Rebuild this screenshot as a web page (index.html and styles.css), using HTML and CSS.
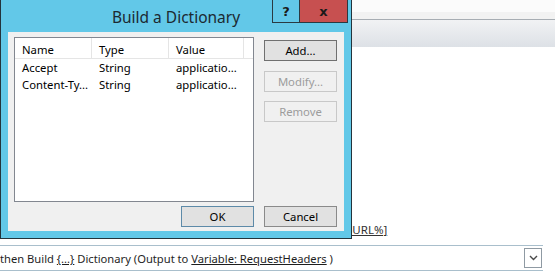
FILE: index.html
```html
<!DOCTYPE html>
<html>
<head>
<meta charset="utf-8">
<link rel="stylesheet" href="styles.css">
</head>
<body>
<div class="page">
  <div class="top-white"></div>
  <div class="tabstrip"></div>
  <div class="toolbar"></div>
  <div class="canvas">
    <div class="url-line"><span class="link">[%URL%]</span></div>
  </div>
  <div class="action-row">
    <div class="action-text">then Build <span class="link">{...}</span> Dictionary (Output to <span class="link">Variable: RequestHeaders</span> )</div>
    <div class="dropdown"><svg width="9" height="6" viewBox="0 0 9 6"><path d="M1 1 L4.5 4.5 L8 1" fill="none" stroke="#4a4a4a" stroke-width="1.4"/></svg></div>
  </div>
</div>

<div class="dialog">
  <div class="titlebar">
    <div class="title">Build a Dictionary</div>
    <div class="caption-buttons">
      <div class="cap-btn help">?</div>
      <div class="cap-btn close">x</div>
    </div>
  </div>
  <div class="client">
    <div class="listview">
      <div class="lv-row lv-header">
        <div class="lv-cell c1">Name</div>
        <div class="lv-cell c2">Type</div>
        <div class="lv-cell c3">Value</div>
        <div class="lv-cell c4"></div>
      </div>
      <div class="lv-row">
        <div class="lv-cell c1">Accept</div>
        <div class="lv-cell c2">String</div>
        <div class="lv-cell c3">applicatio...</div>
      </div>
      <div class="lv-row">
        <div class="lv-cell c1">Content-Ty...</div>
        <div class="lv-cell c2">String</div>
        <div class="lv-cell c3">applicatio...</div>
      </div>
    </div>
    <div class="side-buttons">
      <div class="btn">Add...</div>
      <div class="btn disabled">Modify...</div>
      <div class="btn disabled">Remove</div>
    </div>
    <div class="footer-left">
      <div class="btn default">OK</div>
    </div>
    <div class="footer-right">
      <div class="btn">Cancel</div>
    </div>
  </div>
</div>
</body>
</html>
```

FILE: styles.css
```css
* { box-sizing: border-box; }
html, body {
  margin: 0;
  padding: 0;
  width: 555px;
  height: 278px;
  overflow: hidden;
  background: #ffffff;
  font-family: "Noto Sans", "Open Sans", sans-serif;
  color: #1b1b1b;
}
.page {
  position: relative;
  width: 555px;
  height: 278px;
  display: flex;
  flex-direction: column;
}
.top-white { height: 12px; background: #fbfbfb; }
.tabstrip { height: 8px; background: #f2f2f2; border-bottom: 1px solid #a7adb3; }
.toolbar { height: 27px; background: linear-gradient(#f1f2f4, #dde1e6); }
.canvas {
  flex: 1;
  display: flex;
  flex-direction: column;
  justify-content: flex-end;
  padding-bottom: 8px;
}
.url-line {
  padding-left: 339px;
  font-size: 11.5px;
  line-height: 14px;
  color: #333;
}
.link { text-decoration: underline; }
.action-row {
  height: 26px;
  width: 543px;
  border-top: 1px solid #a9bfcc;
  border-bottom: 1px solid #a9bfcc;
  display: flex;
  align-items: center;
  justify-content: space-between;
  margin-bottom: 7px;
}
.action-text {
  font-size: 11.2px;
  color: #1e1e1e;
  white-space: nowrap;
  padding-left: 0;
}
.dropdown {
  width: 18px;
  height: 20px;
  border: 1px solid #8f9aa3;
  background: #fff;
  display: flex;
  align-items: center;
  justify-content: center;
  margin-right: 1px;
}

/* dialog window */
.dialog {
  position: absolute;
  left: 0;
  top: -1px;
  width: 352px;
  height: 240px;
  background: #62c8e8;
  border: 1px solid #23343c;
  padding: 0 7px 7px 7px;
  display: flex;
  flex-direction: column;
}
.titlebar {
  position: relative;
  height: 32px;
  display: flex;
  align-items: center;
  justify-content: center;
}
.title {
  font-size: 15.5px;
  color: #1c2a31;
  padding-top: 1px;
}
.caption-buttons {
  position: absolute;
  top: 0;
  right: -4px;
  display: flex;
  height: 23px;
  border: 1px solid #2a3a42;
  border-top: none;
}
.cap-btn {
  height: 22px;
  display: flex;
  align-items: center;
  justify-content: center;
  font-family: "DejaVu Sans", sans-serif;
  font-weight: bold;
  font-size: 13px;
  color: #1a1a1a;
}
.cap-btn.help { width: 27px; background: #62c8e8; border-right: 1px solid #2a3a42; }
.cap-btn.close { width: 47px; background: #c75050; font-size: 13px; }

.client {
  flex: 1;
  background: #f0f0f0;
  padding: 5px 6px 3px 6px;
  display: grid;
  grid-template-columns: 240px 73px;
  grid-template-rows: 165px 21px;
  column-gap: 10px;
  row-gap: 4px;
  font-size: 11.3px;
}
.listview {
  background: #fff;
  border: 1px solid #828790;
}
.lv-row {
  display: flex;
  height: 17px;
  align-items: center;
  color: #000;
}
.lv-header {
  height: 21px;
}
.lv-header .lv-cell {
  border-right: 1px solid #e5e5e5;
  border-bottom: 1px solid #e5e5e5;
  height: 21px;
  line-height: 21px;
  padding-top: 1px;
}
.lv-cell {
  padding-left: 7px;
  white-space: nowrap;
  overflow: hidden;
}
.c1 { width: 77px; }
.c2 { width: 77px; }
.c3 { width: 75px; }
.c4 { flex: 1; border-right: none !important; }

.side-buttons {
  display: flex;
  flex-direction: column;
  gap: 9px;
  padding-top: 3px;
}
.btn {
  height: 21px;
  width: 73px;
  border: 1px solid #adadad;
  background: #e1e1e1;
  display: flex;
  align-items: center;
  justify-content: center;
  font-size: 11.3px;
  color: #000;
}
.side-buttons .btn:first-child { border-color: #707070; margin-bottom: 1px; }
.btn.disabled {
  background: #f0f0f0;
  border-color: #c8c8c8;
  color: #9c9c9c;
}
.btn.default { border-color: #5d8aa8; }
.footer-left { display: flex; justify-content: flex-end; }
.footer-right { display: flex; }
.footer-right .btn { border-color: #8a8a8a; }
```
